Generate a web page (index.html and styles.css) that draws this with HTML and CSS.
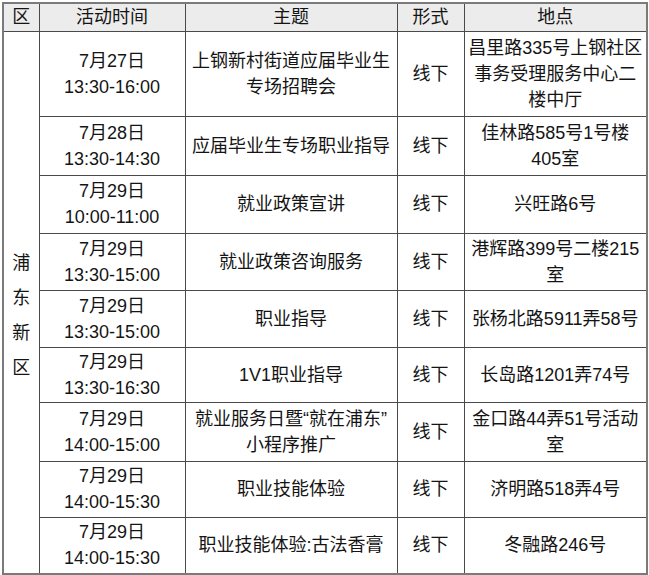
FILE: index.html
```html
<!DOCTYPE html>
<html lang="zh-CN">
<head>
<meta charset="utf-8">
<link rel="stylesheet" href="styles.css">
</head>
<body>
<table class="schedule">
  <colgroup>
    <col class="c-area"><col class="c-time"><col class="c-topic"><col class="c-form"><col class="c-place">
  </colgroup>
  <thead>
    <tr class="head"><th>区</th><th>活动时间</th><th>主题</th><th>形式</th><th>地点</th></tr>
  </thead>
  <tbody>
    <tr class="r3">
      <td class="area" rowspan="9"><span class="vert">浦<br>东<br>新<br>区</span></td>
      <td>7月27日<br>13:30-16:00</td>
      <td>上钢新村街道应届毕业生<br>专场招聘会</td>
      <td>线下</td>
      <td>昌里路335号上钢社区<br>事务受理服务中心二<br>楼中厅</td>
    </tr>
    <tr class="r2 h59">
      <td>7月28日<br>13:30-14:30</td>
      <td>应届毕业生专场职业指导</td>
      <td>线下</td>
      <td>佳林路585号1号楼<br>405室</td>
    </tr>
    <tr class="r2 h58">
      <td>7月29日<br>10:00-11:00</td>
      <td>就业政策宣讲</td>
      <td>线下</td>
      <td>兴旺路6号</td>
    </tr>
    <tr class="r2 h57">
      <td>7月29日<br>13:30-15:00</td>
      <td>就业政策咨询服务</td>
      <td>线下</td>
      <td>港辉路399号二楼215<br>室</td>
    </tr>
    <tr class="r2 h57">
      <td>7月29日<br>13:30-15:00</td>
      <td>职业指导</td>
      <td>线下</td>
      <td>张杨北路5911弄58号</td>
    </tr>
    <tr class="r2 h55">
      <td>7月29日<br>13:30-16:30</td>
      <td>1V1职业指导</td>
      <td>线下</td>
      <td>长岛路1201弄74号</td>
    </tr>
    <tr class="r2 h59">
      <td>7月29日<br>14:00-15:00</td>
      <td>就业服务日暨“就在浦东”<br>小程序推广</td>
      <td>线下</td>
      <td>金口路44弄51号活动<br>室</td>
    </tr>
    <tr class="r2 h56">
      <td>7月29日<br>14:00-15:30</td>
      <td>职业技能体验</td>
      <td>线下</td>
      <td>济明路518弄4号</td>
    </tr>
    <tr class="r2 h57">
      <td>7月29日<br>14:00-15:30</td>
      <td>职业技能体验:古法香膏</td>
      <td>线下</td>
      <td>冬融路246号</td>
    </tr>
  </tbody>
</table>
</body>
</html>
```

FILE: styles.css
```css
html, body {
  margin: 0;
  padding: 0;
  background: #ffffff;
}
body {
  padding: 2px 0 0 2px;
  font-family: "Liberation Sans", "Noto Sans CJK SC", sans-serif;
  color: #141414;
}
.schedule {
  border-collapse: collapse;
  table-layout: fixed;
  width: 644px;
  border: 2px solid #7a7a7a;
  font-size: 18px;
  line-height: 26px;
}
.c-area { width: 36px; }
.c-time { width: 146px; }
.c-topic { width: 212px; }
.c-form { width: 67px; }
.c-place { width: 183px; }
.schedule th,
.schedule td {
  border: 1px solid #4a4a4a;
  text-align: center;
  vertical-align: middle;
  padding: 0;
  font-weight: normal;
  white-space: nowrap;
}
.head {
  height: 28px;
  background: #ececec;
}
.head th {
  border-top-color: #7a7a7a;
  line-height: 24px;
}
.schedule td.area {
  border-left-color: #7a7a7a;
  line-height: 35px;
  vertical-align: top;
  padding-top: 214px;
}
.r3 { height: 85px; }
.h59 { height: 59px; }
.h58 { height: 58px; }
.h57 { height: 57px; }
.h56 { height: 56px; }
.h55 { height: 55px; }
```
